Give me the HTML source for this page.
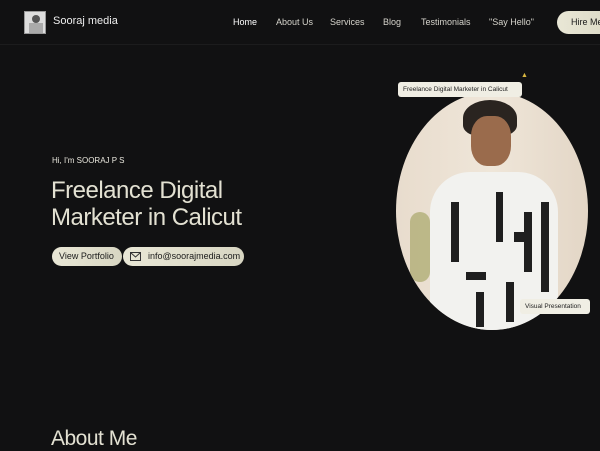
<!DOCTYPE html>
<html><head><style>
*{margin:0;padding:0;box-sizing:border-box}
body{width:600px;height:450px;background:#111112;font-family:"Liberation Sans",sans-serif;color:#e8e6dc;overflow:hidden;position:relative}
.a{position:absolute;white-space:nowrap}
.nav{font-size:9px;color:#d6d4cc;top:17px}
.pill{background:linear-gradient(90deg,#e9e7d6,#d8d6c2);color:#1a1a1a;border-radius:10px}
</style></head><body>
<div class="a" style="left:0;top:44px;width:600px;height:1px;background:#1c1c1d"></div>
<div class="a" style="left:24px;top:11px;width:22px;height:23px;background:#ddd;border:1px solid #999">
<div style="position:absolute;left:7px;top:3px;width:8px;height:8px;border-radius:50%;background:#555"></div>
<div style="position:absolute;left:4px;top:11px;width:14px;height:10px;background:#aaa"></div></div>
<div class="a" style="left:53px;top:15px;font-size:11px;color:#eee">Sooraj media</div>
<div class="a nav" style="left:233px;color:#fff">Home</div>
<div class="a nav" style="left:276px">About Us</div>
<div class="a nav" style="left:330px">Services</div>
<div class="a nav" style="left:383px">Blog</div>
<div class="a nav" style="left:421px">Testimonials</div>
<div class="a nav" style="left:489px">"Say Hello"</div>
<div class="a pill" style="left:557px;top:11px;width:70px;height:23px;border-radius:12px;font-size:9px;padding:6px 0 0 14px">Hire Me</div>
<div class="a" style="left:52px;top:156px;font-size:8px">Hi, I'm SOORAJ P S</div>
<div class="a" style="left:51px;top:177px;font-size:24px;line-height:27px;font-weight:300;color:#e3e1d2;letter-spacing:-0.5px">Freelance Digital<br>Marketer in Calicut</div>
<div class="a pill" style="left:52px;top:247px;width:70px;height:19px;font-size:9px;padding:4px 0 0 7px">View Portfolio</div>
<div class="a pill" style="left:123px;top:247px;width:121px;height:19px;font-size:9px;padding:4px 0 0 25px">info@soorajmedia.com
<svg style="position:absolute;left:7px;top:5px" width="11" height="9" viewBox="0 0 11 9"><rect x="0.5" y="0.5" width="10" height="8" fill="none" stroke="#333"/><path d="M0.5 0.5L5.5 5L10.5 0.5" fill="none" stroke="#333"/></svg></div>
<div class="a" style="left:396px;top:92px;width:192px;height:238px;border-radius:50%;overflow:hidden;background:linear-gradient(90deg,#e8dccd,#efe6d9 50%,#e3d6c6)">
<div style="position:absolute;left:14px;top:120px;width:20px;height:70px;background:#a8a66a;border-radius:10px;opacity:.7"></div>
<div style="position:absolute;left:67px;top:8px;width:54px;height:36px;border-radius:50% 50% 30% 30%;background:#2a2420"></div>
<div style="position:absolute;left:75px;top:24px;width:40px;height:50px;border-radius:40%;background:#9a6b4c"></div>
<div style="position:absolute;left:34px;top:80px;width:128px;height:170px;border-radius:40px 40px 0 0;background:#f2f2ef"></div>
<div style="position:absolute;left:55px;top:110px;width:8px;height:60px;background:#1f1f1f"></div>
<div style="position:absolute;left:100px;top:100px;width:7px;height:50px;background:#1f1f1f"></div>
<div style="position:absolute;left:118px;top:140px;width:14px;height:10px;background:#1f1f1f"></div>
<div style="position:absolute;left:128px;top:120px;width:8px;height:60px;background:#1f1f1f"></div>
<div style="position:absolute;left:70px;top:180px;width:20px;height:8px;background:#1f1f1f"></div>
<div style="position:absolute;left:110px;top:190px;width:8px;height:40px;background:#1f1f1f"></div>
<div style="position:absolute;left:145px;top:110px;width:8px;height:90px;background:#1f1f1f"></div>
<div style="position:absolute;left:80px;top:200px;width:8px;height:35px;background:#1f1f1f"></div>
</div>
<div class="a" style="left:398px;top:82px;width:124px;height:15px;background:#f0eee4;border-radius:3px;color:#222;font-size:6.5px;padding:4px 0 0 5px">Freelance Digital Marketer in Calicut</div>
<div class="a" style="left:521px;top:72px;color:#d8b640;font-size:7px">▲</div>
<div class="a" style="left:520px;top:299px;width:70px;height:15px;background:#f0eee4;border-radius:3px;color:#222;font-size:6.5px;padding:4px 0 0 5px">Visual Presentation</div>
<div class="a" style="left:51px;top:427px;font-size:21px;font-weight:300;color:#e3e1d2;letter-spacing:-0.5px">About Me</div>
</body></html>
